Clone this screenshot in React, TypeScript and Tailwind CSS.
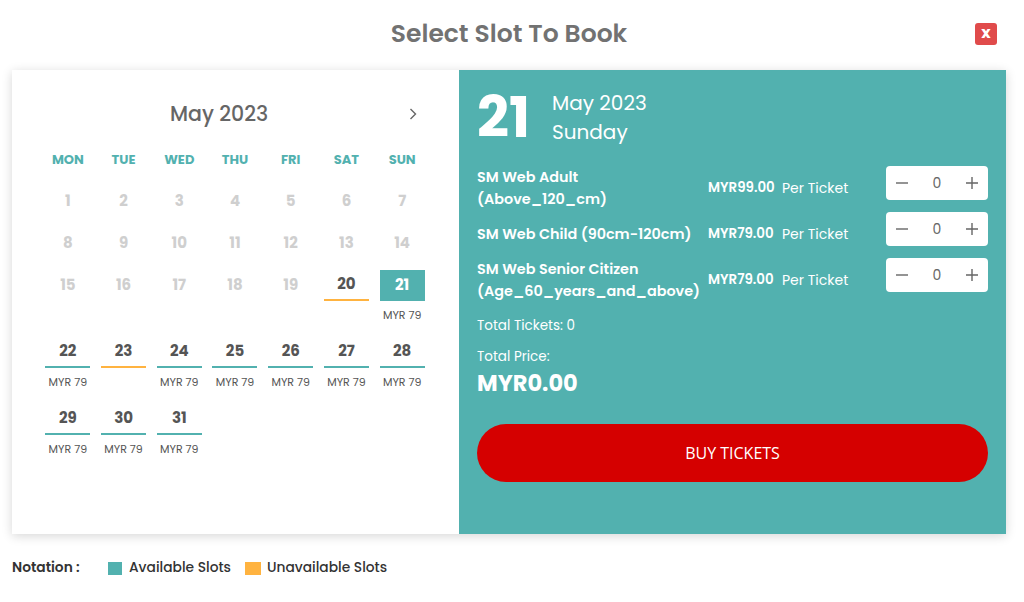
import * as React from "react";

type Day = {
  n: number;
  state: "off" | "open" | "full" | "picked";
  price?: string;
};

const weeks: Day[][] = [
  [1, 2, 3, 4, 5, 6, 7].map((n) => ({ n, state: "off" as const })),
  [8, 9, 10, 11, 12, 13, 14].map((n) => ({ n, state: "off" as const })),
  [
    ...[15, 16, 17, 18, 19].map((n) => ({ n, state: "off" as const })),
    { n: 20, state: "full" },
    { n: 21, state: "picked", price: "MYR 79" },
  ],
  [
    { n: 22, state: "open", price: "MYR 79" },
    { n: 23, state: "full" },
    { n: 24, state: "open", price: "MYR 79" },
    { n: 25, state: "open", price: "MYR 79" },
    { n: 26, state: "open", price: "MYR 79" },
    { n: 27, state: "open", price: "MYR 79" },
    { n: 28, state: "open", price: "MYR 79" },
  ],
  [
    { n: 29, state: "open", price: "MYR 79" },
    { n: 30, state: "open", price: "MYR 79" },
    { n: 31, state: "open", price: "MYR 79" },
  ],
];

const tickets = [
  { name: ["SM Web Adult", "(Above_120_cm)"], price: "MYR99.00" },
  { name: ["SM Web Child (90cm-120cm)"], price: "MYR79.00" },
  { name: ["SM Web Senior Citizen", "(Age_60_years_and_above)"], price: "MYR79.00" },
];

function DayCell({ d }: { d: Day }) {
  const box =
    d.state === "picked"
      ? "bg-[#52b1af] text-white"
      : d.state === "open"
      ? "border-b-2 border-[#52b1af] text-[#555]"
      : d.state === "full"
      ? "border-b-2 border-[#ffb340] text-[#555]"
      : "text-[#cfcfcf]";
  return (
    <div
      className={`w-[45px] h-[31px] flex items-center justify-center text-[15px] font-bold ${box}`}
    >
      {d.n}
    </div>
  );
}

function Stepper() {
  return (
    <div className="w-[102px] h-[34px] mb-[10px] bg-white rounded-[4px] flex items-center justify-between px-[9px] text-[#666]">
      <svg width="14" height="14" viewBox="0 0 14 14">
        <path d="M1 7h12" stroke="#666" strokeWidth="1.4" />
      </svg>
      <span className="text-[14px]">0</span>
      <svg width="14" height="14" viewBox="0 0 14 14">
        <path d="M1 7h12M7 1v12" stroke="#666" strokeWidth="1.4" />
      </svg>
    </div>
  );
}

export default function App() {
  return (
    <div className="w-[1024px] h-[602px] bg-white font-['Poppins','Inter',sans-serif] text-[#555]">
      {/* Header */}
      <div className="h-[70px] pl-[12px] pr-[18px] grid grid-cols-[1fr_auto_1fr] items-center">
        <div />
        <h1 className="text-[25px] font-semibold text-[#727272] pb-[2px]">Select Slot To Book</h1>
        <button className="justify-self-end mr-[9px] mb-[2px] w-[22px] h-[22px] rounded-[3px] bg-[#e04b4b] text-white text-[16px] leading-none font-bold flex items-center justify-center pb-[2px]">
          x
        </button>
      </div>

      {/* Card */}
      <div className="ml-[12px] w-[994px] h-[464px] flex bg-white shadow-[0_2px_10px_rgba(0,0,0,0.16)]">
        {/* Calendar */}
        <div className="w-[447px] pl-[28px] pr-[29px] pt-[30px]">
          <div className="flex items-center h-[28px]">
            <span className="ml-[130px] text-[20.5px] font-medium text-[#666]">May 2023</span>
            <svg className="ml-auto mr-[12px]" width="10" height="14" viewBox="0 0 10 14">
              <path d="M2.5 2l5 5-5 5" fill="none" stroke="#666" strokeWidth="1.4" />
            </svg>
          </div>
          <div className="mt-[22px] grid grid-cols-7 text-center text-[13px] font-bold text-[#52b1af] leading-5">
            {["MON", "TUE", "WED", "THU", "FRI", "SAT", "SUN"].map((d) => (
              <span key={d}>{d}</span>
            ))}
          </div>
          <div className="mt-[16px] flex flex-col gap-[11px]">
            {weeks.map((w, i) => {
              const hasPrice = w.some((d) => d.price);
              return (
                <div key={i} className="grid grid-cols-7">
                  {w.map((d) => (
                    <div key={d.n} className="flex flex-col items-center">
                      <DayCell d={d} />
                      {hasPrice && (
                        <div className="h-[25px] pt-[6px] text-[11px] leading-4 text-[#555]">
                          {d.price}
                        </div>
                      )}
                    </div>
                  ))}
                </div>
              );
            })}
          </div>
        </div>

        {/* Ticket panel */}
        <div className="flex-1 bg-[#52b1af] text-white pl-[18px] pr-[18px] pt-[19px]">
          <div className="flex items-center">
            <span className="text-[56px] font-bold leading-none w-[75px]">21</span>
            <div className="text-[20px] leading-[29px]">
              <div>May 2023</div>
              <div>Sunday</div>
            </div>
          </div>

          <div className="mt-[19px] flex flex-col gap-[2px]">
            {tickets.map((t, i) => (
              <div key={i} className="flex items-center">
                <div className="w-[231px] text-[14.4px] font-semibold leading-[22px]">
                  {t.name.map((l) => (
                    <div key={l}>{l}</div>
                  ))}
                </div>
                <div className="w-[74px] text-[13.4px] font-semibold">{t.price}</div>
                <div className="flex-1 text-[14px]">Per Ticket</div>
                <Stepper />
              </div>
            ))}
          </div>

          <div className="mt-[14px] text-[13.5px] leading-5">Total Tickets: 0</div>
          <div className="mt-[11px] text-[13.5px] leading-5">Total Price:</div>
          <div className="mt-[2px] text-[22.5px] font-bold leading-7">MYR0.00</div>

          <button className="mt-[27px] w-full h-[58px] rounded-full bg-[#d50000] text-white text-[16px] font-['Open_Sans',sans-serif]">
            BUY TICKETS
          </button>
        </div>
      </div>

      {/* Notation */}
      <div className="mt-[24px] pl-[12px] flex items-center text-[13.8px] text-[#333] leading-5">
        <span className="font-semibold w-[96px]">Notation :</span>
        <span className="w-[14px] h-[13px] bg-[#52b1af]" />
        <span className="ml-[7px] font-medium">Available Slots</span>
        <span className="ml-[14px] w-[16px] h-[13px] bg-[#ffb340]" />
        <span className="ml-[6px] font-medium">Unavailable Slots</span>
      </div>
    </div>
  );
}
